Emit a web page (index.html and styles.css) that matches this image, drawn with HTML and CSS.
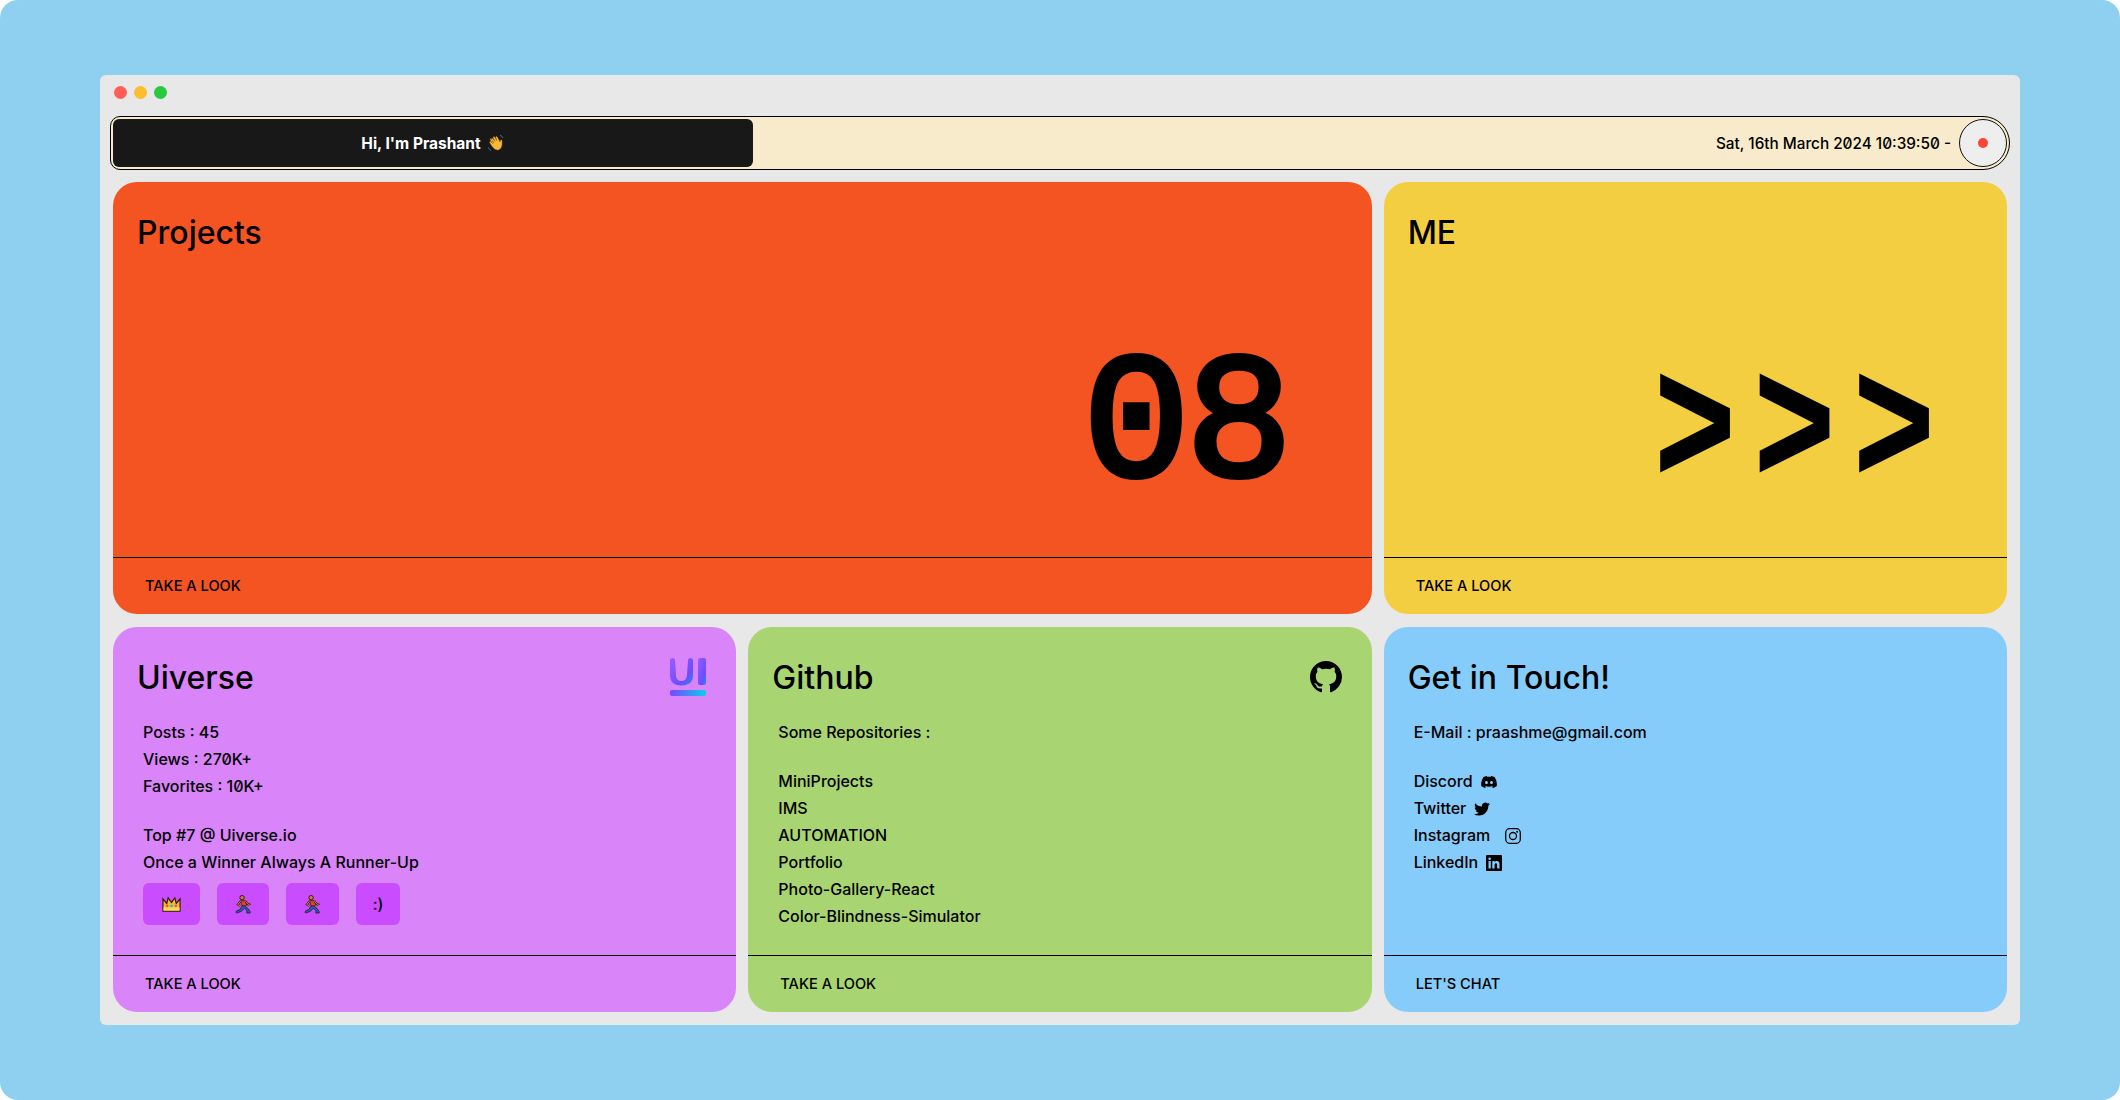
FILE: index.html
```html
<!DOCTYPE html>
<html lang="en">
<head>
<meta charset="utf-8">
<title>Prashant</title>
<link rel="stylesheet" href="styles.css">
</head>
<body>
<main class="window">
  <div class="dots"><span class="dot red"></span><span class="dot yellow"></span><span class="dot green"></span></div>
  <header class="bar">
    <div class="hello">
      <span>Hi, I'm Prashant</span>
      <svg class="wave" viewBox="0 0 18 18"><path d="M4 5 7 9 4.500 5.800C3.800 4.800 5 3.800 5.800 4.800L8 7.500 6.300 4C5.700 2.900 7 2.200 7.700 3.200L10 6.800 8.800 3.600C8.400 2.500 9.800 2 10.300 3L13 8C13.300 6.800 13.700 5.800 14.500 5.900 15.400 6 15 7.500 15 9 15.200 12 14 15.500 11 16 8 16.300 6 13.500 4.500 11.500L2.800 8.800C2.200 7.800 3.400 7 4.100 7.900L6 10 3.400 6.300C2.800 5.400 3.400 4.200 4 5Z" fill="#f6b93b" stroke="#a8711a" stroke-width=".5"/><path d="M1.500 13.500c.3 1.500 1.200 2.500 2.600 3M13 1.500c1.500.3 2.500 1.200 3 2.600" fill="none" stroke="#2a7f9e" stroke-width="1"/></svg>
    </div>
    <div class="clock">
      <span>Sat, 16th March 2024 10:39:50 -</span>
      <div class="rec"><span class="rec-dot"></span></div>
    </div>
  </header>
  <section class="grid">
    <article class="card orange wide">
      <div class="card-body">
        <h2 class="title">Projects</h2>
        <div class="big big-num">08</div>
      </div>
      <footer class="card-foot">TAKE A LOOK</footer>
    </article>
    <article class="card amber">
      <div class="card-body">
        <h2 class="title">ME</h2>
        <div class="big big-arrows">&gt;&gt;&gt;</div>
      </div>
      <footer class="card-foot">TAKE A LOOK</footer>
    </article>
    <article class="card violet">
      <div class="card-body">
        <div class="title-row">
          <h2 class="title">Uiverse</h2>
          <svg class="ui-logo" viewBox="0 0 36 38" preserveAspectRatio="none">
            <defs>
              <linearGradient id="uig" x1="0" y1="0" x2="1" y2="1"><stop offset="0" stop-color="#9a5cff"/><stop offset=".7" stop-color="#6a4dff"/><stop offset="1" stop-color="#1f8ff0"/></linearGradient>
              <linearGradient id="uib" x1="0" y1="0" x2="1" y2="0"><stop offset="0" stop-color="#7a45ff"/><stop offset="1" stop-color="#08d0ea"/></linearGradient>
            </defs>
            <path d="M0 2.500a2.500 2.500 0 0 1 5 0l1 14c0 4 1.500 6.500 5.500 6.500s5.500-2.500 5.500-6.500l1-14a2.500 2.500 0 0 1 5 0V17c0 7-4 10.500-11.500 10.500S0 24 0 17Z" fill="url(#uig)"/>
            <rect x="28" y="0" width="8" height="27" rx="2" fill="url(#uig)"/>
            <rect x="0" y="32" width="36" height="6" rx="2" fill="url(#uib)"/>
          </svg>
        </div>
        <div class="lines">
          <p>Posts : 45</p>
          <p>Views : 270K+</p>
          <p>Favorites : 10K+</p>
          <p class="spaced">Top #7 @ Uiverse.io</p>
          <p>Once a Winner Always A Runner-Up</p>
        </div>
        <div class="badges">
          <span class="badge crown"><svg class="emoji" viewBox="0 0 20 16"><path d="M1 2 5 7l1.500-6L10 6l3.500-5L15 7l4-5v13H1Z" fill="#f5b82e" stroke="#2b1a00" stroke-width="1.200"/><rect x="1.500" y="11" width="17" height="3.500" fill="#f9d65c"/><circle cx="5.500" cy="9.500" r="1.200" fill="#f0319c"/><circle cx="10" cy="9.500" r="1.300" fill="#17b7d8"/><circle cx="14.500" cy="9.500" r="1.200" fill="#f0319c"/></svg></span>
          <span class="badge runner"><svg class="emoji" viewBox="0 0 20 20"><circle cx="8.500" cy="2.800" r="2.300" fill="#c9803f" stroke="#2b1a00"/><path d="M7 6h5l1.500 4.500-2 1.500-3-.5Z" fill="#e8402a" stroke="#2b1a00" stroke-width=".8"/><path d="M8.500 11.500 6 15.500l-3 1-1 1.500 1 1 5-2 3-3 2.500 2v3h3.500v-1.500L14.500 14l-3-2.500Z" fill="#1d5fc2" stroke="#2b1a00" stroke-width=".8"/><path d="M7 6.500 4 10l2.500 1.500M12 6.500l3 3.500 2.500-1" fill="none" stroke="#2b1a00" stroke-width="2"/><path d="M7 6.500 4 10l2.500 1.500M12 6.500l3 3.500 2.500-1" fill="none" stroke="#d9902a" stroke-width="1"/></svg></span>
          <span class="badge runner"><svg class="emoji" viewBox="0 0 20 20"><circle cx="8.500" cy="2.800" r="2.300" fill="#c9803f" stroke="#2b1a00"/><path d="M7 6h5l1.500 4.500-2 1.500-3-.5Z" fill="#e8402a" stroke="#2b1a00" stroke-width=".8"/><path d="M8.500 11.500 6 15.500l-3 1-1 1.500 1 1 5-2 3-3 2.500 2v3h3.500v-1.500L14.500 14l-3-2.500Z" fill="#1d5fc2" stroke="#2b1a00" stroke-width=".8"/><path d="M7 6.500 4 10l2.500 1.500M12 6.500l3 3.500 2.500-1" fill="none" stroke="#2b1a00" stroke-width="2"/><path d="M7 6.500 4 10l2.500 1.500M12 6.500l3 3.500 2.500-1" fill="none" stroke="#d9902a" stroke-width="1"/></svg></span>
          <span class="badge smile">:)</span>
        </div>
      </div>
      <footer class="card-foot">TAKE A LOOK</footer>
    </article>
    <article class="card green">
      <div class="card-body">
        <div class="title-row">
          <h2 class="title">Github</h2>
          <svg class="gh-logo" viewBox="0 0 16 16"><path fill="#000" d="M8 0C3.580 0 0 3.580 0 8c0 3.540 2.290 6.530 5.470 7.590.4.070.55-.17.55-.38 0-.19-.01-.82-.01-1.490-2.010.37-2.530-.49-2.690-.94-.09-.23-.48-.94-.82-1.130-.28-.15-.68-.52-.01-.53.630-.01 1.080.58 1.230.82.720 1.210 1.870.87 2.330.66.070-.52.280-.87.510-1.070-1.780-.2-3.640-.89-3.640-3.950 0-.87.31-1.590.82-2.150-.08-.2-.36-1.020.08-2.120 0 0 .67-.21 2.200.82.640-.18 1.320-.27 2-.27s1.360.09 2 .27c1.530-1.040 2.200-.82 2.200-.82.440 1.100.16 1.920.08 2.120.51.560.82 1.270.82 2.150 0 3.070-1.870 3.750-3.650 3.950.290.250.540.730.540 1.480 0 1.070-.01 1.930-.01 2.200 0 .210.150.460.550.380A8.010 8.010 0 0 0 16 8c0-4.420-3.580-8-8-8Z"/></svg>
        </div>
        <div class="lines">
          <p>Some Repositories :</p>
          <p class="spaced">MiniProjects</p>
          <p>IMS</p>
          <p>AUTOMATION</p>
          <p>Portfolio</p>
          <p>Photo-Gallery-React</p>
          <p>Color-Blindness-Simulator</p>
        </div>
      </div>
      <footer class="card-foot">TAKE A LOOK</footer>
    </article>
    <article class="card sky">
      <div class="card-body">
        <h2 class="title">Get in Touch!</h2>
        <div class="lines">
          <p>E-Mail : praashme@gmail.com</p>
          <p class="spaced social">Discord <svg class="soc" viewBox="0 0 16 16"><path d="M13.500 3A13 13 0 0 0 10.300 2l-.4.800a12 12 0 0 0-3.800 0L5.700 2a13 13 0 0 0-3.200 1C.5 6 0 9 .2 11.900A13 13 0 0 0 4.200 14l.8-1.300-1.300-.7.300-.2a9 9 0 0 0 8 0l.3.200-1.300.7.800 1.300a13 13 0 0 0 4-2.100C16.100 8.500 15.300 5.500 13.500 3ZM5.500 10.200c-.8 0-1.400-.7-1.400-1.600S4.700 7 5.500 7s1.400.7 1.400 1.600-.6 1.600-1.400 1.600Zm5 0c-.8 0-1.400-.7-1.400-1.600S9.700 7 10.500 7s1.400.7 1.400 1.600-.6 1.600-1.400 1.600Z" fill="#000"/></svg></p>
          <p class="social">Twitter <svg class="soc" viewBox="0 0 16 16"><path d="M5 14.500c6 0 9.300-5 9.300-9.300v-.4c.6-.5 1.200-1 1.700-1.700-.6.300-1.300.5-1.900.5.700-.4 1.200-1 1.400-1.800-.6.400-1.300.6-2 .8A3.300 3.300 0 0 0 7.900 5.600C5.200 5.500 2.800 4.200 1.200 2.200c-.9 1.500-.4 3.400 1 4.400-.5 0-1-.2-1.500-.4 0 1.600 1.100 3 2.600 3.300-.5.100-1 .1-1.500 0 .4 1.300 1.600 2.200 3.100 2.300A6.600 6.600 0 0 1 0 13.200a9.300 9.300 0 0 0 5 1.300Z" fill="#000"/></svg></p>
          <p class="social insta">Instagram <svg class="soc" viewBox="0 0 16 16"><rect x=".7" y=".7" width="14.600" height="14.600" rx="4" fill="none" stroke="#000" stroke-width="1.300"/><circle cx="8" cy="8" r="3.500" fill="none" stroke="#000" stroke-width="1.300"/><circle cx="12.200" cy="3.800" r="1" fill="#000"/></svg></p>
          <p class="social">LinkedIn <svg class="soc" viewBox="0 0 16 16"><path fill="#000" fill-rule="evenodd" d="M1 0h14a1 1 0 0 1 1 1v14a1 1 0 0 1-1 1H1a1 1 0 0 1-1-1V1a1 1 0 0 1 1-1ZM2.500 6v7.500h2.300V6Zm1.150-3.500a1.300 1.300 0 1 0 0 2.600 1.300 1.300 0 0 0 0-2.600ZM6.300 6v7.500h2.300V9.800c0-2 2.500-2.200 2.500 0v3.700h2.400V9c0-3.600-3.700-3.500-4.900-1.700V6Z"/></svg></p>
        </div>
      </div>
      <footer class="card-foot">LET'S CHAT</footer>
    </article>
  </section>
</main>
</body>
</html>
```

FILE: styles.css
```css
* { box-sizing: border-box; }
html { height: 100%; background: #fff; }
body {
  height: 100%;
  margin: 0;
  padding: 75px 100px;
  background: #8fd0f0;
  border-radius: 18px;
  font-family: "Inter", "Noto Sans", sans-serif;
  font-feature-settings: "zero";
  color: #000;
  overflow: hidden;
}
.window {
  width: 1920px;
  height: 950px;
  background: #e8e8e8;
  border-radius: 6px;
  padding: 10px 13px 13px;
  display: flex;
  flex-direction: column;
}
.dots { display: flex; gap: 7px; height: 31px; padding: 0 0 0 1px; }
.dot { width: 13px; height: 13px; border-radius: 50%; margin-top: 1px; }
.red { background: #ff5f57; }
.yellow { background: #febc2e; }
.green { background: #28c840; }
.bar {
  margin: 0 -3px;
  height: 54px;
  padding: 2px;
  border: 1px solid #000;
  border-radius: 10px 27px 27px 10px;
  background: #f7ebcb;
  display: flex;
  justify-content: space-between;
  align-items: stretch;
}
.hello {
  width: 640px;
  background: #181818;
  color: #fff;
  border-radius: 6px;
  font-size: 15.5px;
  font-weight: 700;
  display: flex;
  align-items: center;
  justify-content: center;
  gap: 6px;
}
.wave { width: 18px; height: 18px; }
.clock { display: flex; align-items: center; gap: 8px; font-size: 15.3px; font-weight: 500; }
.rec {
  width: 48px;
  height: 48px;
  border: 1px solid #111;
  border-radius: 50%;
  background: #eee;
  display: flex;
  align-items: center;
  justify-content: center;
}
.rec-dot { width: 10px; height: 10px; border-radius: 50%; background: #ff4238; }
.grid {
  flex: 1;
  margin-top: 12px;
  display: grid;
  grid-template-columns: repeat(3, 1fr);
  grid-template-rows: 432px 385px;
  gap: 13px 12px;
}
.card {
  border-radius: 24px;
  display: flex;
  flex-direction: column;
  overflow: hidden;
}
.wide { grid-column: span 2; }
.orange { background: #f45421; }
.amber { background: #f3ce40; }
.violet { background: #d985f9; }
.green.card { background: #a8d571; }
.sky { background: #85ccfa; }
.card-body { flex: 1; padding: 31px 24px 0; display: flex; flex-direction: column; min-height: 0; }
.card-foot {
  height: 57px;
  border-top: 1px solid #000;
  padding-left: 32px;
  display: flex;
  align-items: center;
  font-size: 14.6px;
  font-weight: 500;
}
.title { margin: 0; font-size: 32px; line-height: 40px; font-weight: 500; }
.title-row { display: flex; justify-content: space-between; align-items: flex-start; padding-right: 6px; }
.ui-logo { width: 36px; height: 38px; }
.gh-logo { width: 32px; height: 32px; margin-top: 3px; }
.big { font-family: "Liberation Mono", monospace; line-height: 1; white-space: nowrap; align-self: flex-end; }
.big-num { font-size: 178px; letter-spacing: -4px; -webkit-text-stroke: 6px #000; margin: 86px 59px 0 0; }
.big-arrows { font-size: 136px; font-weight: 700; letter-spacing: 18px; -webkit-text-stroke: 1.5px #000; transform: scaleY(1.31); margin: 114px 30px 0 0; }
.lines { margin-top: 21px; padding-left: 6px; font-size: 16px; line-height: 27px; font-weight: 500; }
.lines p { margin: 0; }
.lines .spaced { margin-top: 22px; }
.social { display: flex; align-items: center; gap: 8px; }
.insta { gap: 15px; }
.soc { width: 16px; height: 16px; }
.badges { display: flex; gap: 17px; margin-top: 7px; padding-left: 6px; }
.badge { height: 42px; border-radius: 6px; background: #c94cff; display: flex; align-items: center; justify-content: center; font-size: 16px; font-weight: 500; }
.crown { width: 57px; }
.runner { width: 52px; }
.runner + .runner { width: 53px; }
.smile { width: 44px; }
.emoji { width: 19px; height: 19px; }
```
